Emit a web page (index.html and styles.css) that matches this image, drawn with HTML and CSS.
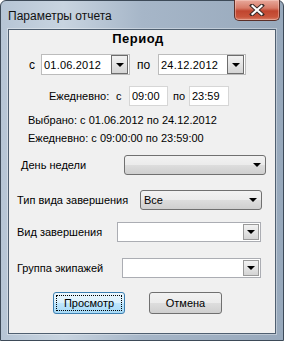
FILE: index.html
```html
<!DOCTYPE html>
<html lang="ru">
<head>
    <meta charset="UTF-8">
    <title>Параметры отчета</title>
    <link rel="stylesheet" href="styles.css">
</head>
<body>
    <div class="window">
        <div class="titlebar">
            <span class="title">Параметры отчета</span>
            <div class="close-btn">
                <svg width="16" height="12" viewBox="0 0 16 12">
                    <path d="M3 1.5 L13 10.5 M13 1.5 L3 10.5" stroke="#3a2a28" stroke-width="4" stroke-linecap="square"/>
                    <path d="M3.5 2 L12.5 10 M12.5 2 L3.5 10" stroke="#fff" stroke-width="2.2" stroke-linecap="square"/>
                </svg>
            </div>
        </div>

        <div class="client">
            <div class="period-title">Период</div>

            <!-- date range -->
            <div class="row date-row">
                <span class="lbl lbl-from">с</span>
                <div class="datebox date-from">
                    <span class="val">01.06.2012</span>
                    <span class="dd-btn"><i class="arrow"></i></span>
                </div>
                <span class="lbl lbl-to">по</span>
                <div class="datebox date-to">
                    <span class="val">24.12.2012</span>
                    <span class="dd-btn"><i class="arrow"></i></span>
                </div>
            </div>

            <!-- daily time -->
            <div class="row time-row">
                <span class="lbl lbl-daily">Ежедневно:</span>
                <span class="lbl lbl-tfrom">с</span>
                <div class="timebox time-from">09:00</div>
                <span class="lbl lbl-tto">по</span>
                <div class="timebox time-to">23:59</div>
            </div>

            <div class="info info-1">Выбрано: с 01.06.2012 по 24.12.2012</div>
            <div class="info info-2">Ежедневно: с 09:00:00 по 23:59:00</div>

            <div class="row field-row row-day">
                <span class="field-lbl">День недели</span>
                <div class="combo flat"><span class="val"></span><i class="arrow"></i></div>
            </div>

            <div class="row field-row row-type">
                <span class="field-lbl">Тип вида завершения</span>
                <div class="combo flat"><span class="val">Все</span><i class="arrow"></i></div>
            </div>

            <div class="row field-row row-kind">
                <span class="field-lbl">Вид завершения</span>
                <div class="combo edit"><span class="val"></span><span class="dd-btn"><i class="arrow"></i></span></div>
            </div>

            <div class="row field-row row-group">
                <span class="field-lbl">Группа экипажей</span>
                <div class="combo edit"><span class="val"></span><span class="dd-btn"><i class="arrow"></i></span></div>
            </div>

            <div class="row buttons">
                <div class="btn btn-default"><span class="focus">Просмотр</span></div>
                <div class="btn">Отмена</div>
            </div>
        </div>
    </div>
</body>
</html>
```

FILE: styles.css
```css
* {
    box-sizing: border-box;
}

body {
    margin: 0;
    width: 284px;
    height: 341px;
    overflow: hidden;
    font-family: 'Liberation Sans', Arial, sans-serif;
    font-size: 11px;
    color: #000;
    background: #fff;
}

.window {
    width: 284px;
    height: 341px;
    padding: 0 7px 6px 7px;
    border: 1px solid #3d4a58;
    border-radius: 6px 6px 0 0;
    background: linear-gradient(to right, #b6c5d5 0%, #c8d4e0 22%, #a6b6c8 50%, #98a9bc 100%);
    display: flex;
    flex-direction: column;
}

.titlebar {
    height: 28px;
    display: flex;
    align-items: flex-start;
    flex-shrink: 0;
}

.title {
    font-family: 'Liberation Sans', Arial, sans-serif;
    font-size: 12px;
    margin-top: 8px;
    color: #111;
}

.close-btn {
    margin-left: auto;
    margin-right: -4px;
    margin-top: -1px;
    width: 46px;
    height: 21px;
    border: 1px solid #5b2f28;
    border-top: none;
    border-radius: 0 0 5px 5px;
    background: linear-gradient(to bottom, #e8a99c 0%, #d77b68 40%, #c0452f 55%, #c9553c 85%, #d8826d 100%);
    display: flex;
    align-items: center;
    justify-content: center;
    box-shadow: inset 0 0 0 1px rgba(255, 220, 210, 0.4);
}

.close-btn svg {
    display: block;
}

.client {
    flex: 1;
    background: #f0f0f0;
    border: 1px solid #4f5f70;
    box-shadow: 0 0 0 1px rgba(255, 255, 255, 0.35);
}

.period-title {
    height: 16px;
    line-height: 16px;
    margin-top: 1px;
    padding-right: 8px;
    text-align: center;
    font-weight: bold;
    font-size: 13px;
    letter-spacing: 0.5px;
}

.row {
    display: flex;
    align-items: center;
}

.lbl {
    flex-shrink: 0;
}

/* date range row */
.date-row {
    margin-top: 7px;
    height: 21px;
    padding-left: 20px;
    font-size: 12px;
}

.lbl-from {
    width: 12px;
}

.lbl-to {
    margin-left: 7px;
    width: 21px;
}

.datebox {
    height: 21px;
    background: #fff;
    border: 1px solid #bcbcbc;
    display: flex;
    align-items: center;
    padding-left: 2px;
    padding-right: 1px;
}

.date-from {
    width: 89px;
}

.date-to {
    width: 88px;
}

.datebox .val {
    flex: 1;
    font-size: 11px;
    letter-spacing: 0.2px;
}

.dd-btn {
    width: 17px;
    height: 19px;
    border: 1px solid #6d6d6d;
    background: linear-gradient(to bottom, #f2f2f2 0%, #e4e4e4 50%, #d4d4d4 100%);
    display: flex;
    align-items: center;
    justify-content: center;
}

.arrow {
    display: block;
    width: 0;
    height: 0;
    border-left: 4px solid transparent;
    border-right: 4px solid transparent;
    border-top: 4px solid #000;
}

/* daily time row */
.time-row {
    margin-top: 11px;
    height: 20px;
    padding-left: 40px;
}

.lbl-daily {
    width: 67px;
}

.lbl-tfrom {
    width: 13px;
}

.lbl-tto {
    margin-left: 5px;
    width: 16px;
}

.timebox {
    height: 20px;
    background: #fff;
    border: 1px solid #d6d6d6;
    padding-left: 2px;
    line-height: 18px;
}

.time-from {
    width: 39px;
}

.time-to {
    width: 40px;
}

/* summary */
.info {
    height: 14px;
    line-height: 14px;
    padding-left: 19px;
}

.info-1 {
    margin-top: 7px;
}

.info-2 {
    margin-top: 4px;
}

/* combo rows */
.field-row {
    height: 20px;
    padding-left: 8px;
}

.field-lbl {
    flex-shrink: 0;
}

.row-day {
    margin-top: 10px;
    padding-left: 12px;
}

.row-day .field-lbl {
    width: 103px;
}

.row-day .combo {
    width: 142px;
}

.row-type {
    margin-top: 15px;
}

.row-type .field-lbl {
    width: 123px;
}

.row-type .combo {
    width: 122px;
}

.row-kind {
    margin-top: 12px;
}

.row-kind .field-lbl {
    width: 100px;
}

.row-kind .combo {
    width: 144px;
}

.row-group {
    margin-top: 16px;
}

.row-group .field-lbl {
    width: 105px;
}

.row-group .combo {
    width: 139px;
}

.combo {
    height: 20px;
    display: flex;
    align-items: center;
}

.combo .val {
    flex: 1;
}

.combo.flat {
    border: 1px solid #707070;
    border-radius: 3px;
    background: linear-gradient(to bottom, #f2f2f2 0%, #ebebeb 50%, #dddddd 51%, #cfcfcf 100%);
    padding: 0 4px 0 3px;
}

.combo.edit {
    background: #fff;
    border: 1px solid #abadb3;
    padding-right: 1px;
}

.combo.edit .dd-btn {
    height: 16px;
    width: 16px;
    border-color: #9a9a9a;
}

/* buttons */
.buttons {
    margin-top: 14px;
    height: 22px;
    padding-left: 44px;
    gap: 24px;
}

.btn {
    width: 73px;
    height: 22px;
    border: 1px solid #707070;
    border-radius: 3px;
    background: linear-gradient(to bottom, #f2f2f2 0%, #ebebeb 50%, #dddddd 51%, #cfcfcf 100%);
    display: flex;
    align-items: center;
    justify-content: center;
    font-size: 11px;
}

.btn-default {
    width: 72px;
    border-color: #3c7fb1;
    background: linear-gradient(to bottom, #eaf6fd 0%, #d9f0fc 50%, #bee6fd 51%, #a7d9f5 100%);
    padding: 2px;
}

.btn-default .focus {
    flex: 1;
    align-self: stretch;
    display: flex;
    align-items: center;
    justify-content: center;
    border: 1px dotted #000;
}
```
